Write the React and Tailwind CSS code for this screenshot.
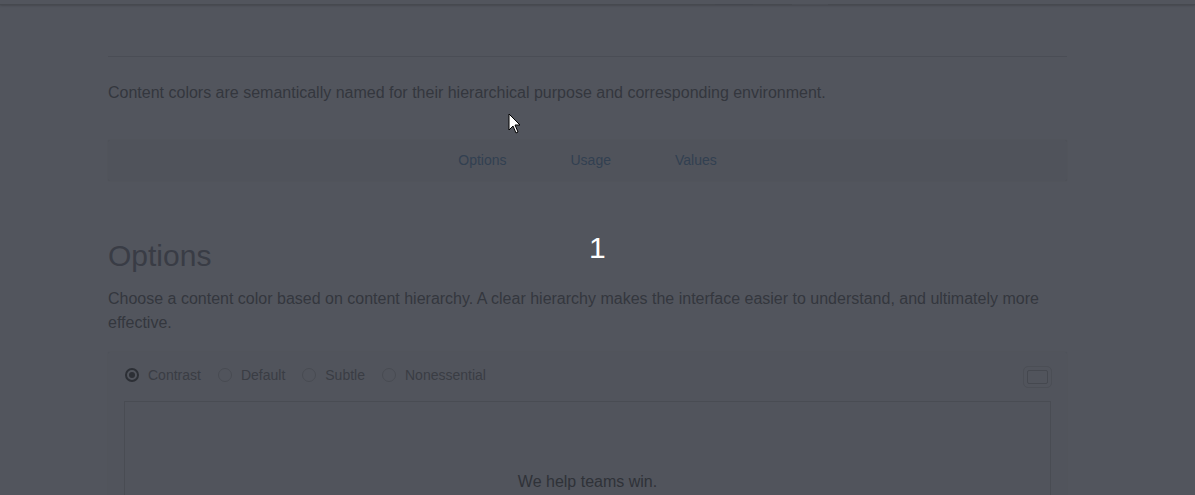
import React, { useState } from "react";

const options = ["Contrast", "Default", "Subtle", "Nonessential"];

export default function App() {
  const [selected, setSelected] = useState("Contrast");

  return (
    <div className="relative h-[495px] overflow-hidden bg-[#52555d] font-['Liberation_Sans',Arial,sans-serif] text-[#34373e]">
      {/* Top header edge */}
      <div className="h-[5px] border-b border-[#46494f] shadow-[0_1px_2px_rgba(0,0,0,0.15)]">
        <div className="ml-[715px] flex gap-[39px] pt-[4px]">
          <span className="h-[1px] w-[38px] bg-[#44474e]" />
          <span className="h-[1px] w-[36px] bg-[#4a4d54]" />
        </div>
      </div>

      <main className="ml-[108px] w-[959px]">
        <hr className="mt-[51px] border-t border-[#4a4d55]" />

        <p className="mt-[27px] text-[16px] leading-[18px]">
          Content colors are semantically named for their hierarchical purpose and corresponding environment.
        </p>

        {/* Section nav */}
        <nav className="mt-[38px] flex h-[41px] items-center justify-center gap-[64px] rounded-[2px] bg-[#50535b] text-[14px] text-[#324051] shadow-[0_0_1px_rgba(0,0,0,0.15)]">
          <a>Options</a>
          <a>Usage</a>
          <a>Values</a>
        </nav>

        <h2 className="mt-[58px] text-[30px] leading-[34px] font-normal text-[#393c45]">Options</h2>
        <p className="mt-[14px] text-[16px] leading-[24px]">
          Choose a content color based on content hierarchy. A clear hierarchy makes the interface easier to understand, and ultimately more effective.
        </p>

        {/* Example card */}
        <section className="mt-[17px] rounded-[2px] bg-[#51545c] pl-[17px] pr-[16px] pt-[11px] shadow-[0_0_1px_rgba(0,0,0,0.12)]">
          <div className="flex h-[24px] items-center justify-between">
            <div className="flex items-center text-[14px] text-[#3a3d44]">
              {options.map((o) => (
                <label key={o} onClick={() => setSelected(o)} className="mr-[17px] flex cursor-pointer items-center gap-[9px]">
                  {selected === o ? (
                    <span className="flex h-[14px] w-[14px] items-center justify-center rounded-full border-2 border-[#2c2f35]">
                      <span className="h-[6px] w-[6px] rounded-full bg-[#2c2f35]" />
                    </span>
                  ) : (
                    <span className="h-[14px] w-[14px] rounded-full border border-[#484b52]" />
                  )}
                  <span>{o}</span>
                </label>
              ))}
            </div>
            <button className="mr-[-1px] mt-[3px] flex h-[22px] w-[29px] items-center justify-center rounded-[5px] border border-[#4b4e55]">
              <span className="h-[14px] w-[21px] rounded-[2px] border border-[#45484f]" />
            </button>
          </div>

          <div className="-ml-px mt-[14px] h-[120px] border border-b-0 border-[#494c53] pt-[68px] text-center text-[16px] text-[#2f3238]">
            We help teams win.
          </div>
        </section>
      </main>

      {/* Countdown overlay */}
      <div className="absolute left-[589px] top-[230px] text-[30px] leading-[36px] text-white">1</div>

      {/* Mouse pointer */}
      <svg className="absolute left-[508px] top-[113px]" width="14" height="22" viewBox="0 0 14 22">
        <path d="M1 1 L1 17 L5 13 L8 20 L10 19 L7 12 L12 12 Z" fill="#ffffff" stroke="#000000" strokeWidth="1" strokeLinejoin="round" />
      </svg>
    </div>
  );
}
